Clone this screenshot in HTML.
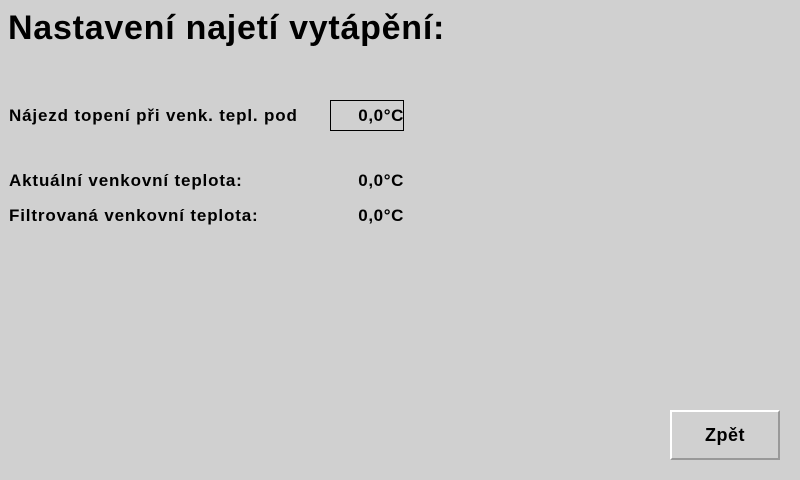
<!DOCTYPE html>
<html><head><meta charset="utf-8"><style>
body{margin:0;width:800px;height:480px;background:#d0d0d0;font-family:"Liberation Sans",Arial,sans-serif;font-weight:bold;color:#000;position:relative;overflow:hidden}
.a{position:absolute;white-space:nowrap}
.t{left:8px;top:9px;font-size:34px;letter-spacing:0.75px}
.l{font-size:17px;left:9px;letter-spacing:0.85px}
.v{font-size:17px;right:396px;text-align:right;letter-spacing:0.6px}
.box{position:absolute;left:330px;top:100px;width:72px;height:29px;border:1px solid #000;box-sizing:content-box}
.btn{position:absolute;left:670px;top:410px;width:106px;height:46px;border-top:2px solid #fff;border-left:2px solid #fff;border-right:2px solid #999;border-bottom:2px solid #999;font-size:18px;text-align:center;line-height:46px;box-sizing:content-box;letter-spacing:0.5px}
</style></head><body>
<div class="a t">Nastavení najetí vytápění:</div>
<div class="a l" style="top:106px">Nájezd topení při venk. tepl. pod</div>
<div class="box"></div>
<div class="a v" style="top:106px">0,0°C</div>
<div class="a l" style="top:171px">Aktuální venkovní teplota:</div>
<div class="a v" style="top:171px">0,0°C</div>
<div class="a l" style="top:206px">Filtrovaná venkovní teplota:</div>
<div class="a v" style="top:206px">0,0°C</div>
<div class="btn">Zpět</div>
</body></html>
